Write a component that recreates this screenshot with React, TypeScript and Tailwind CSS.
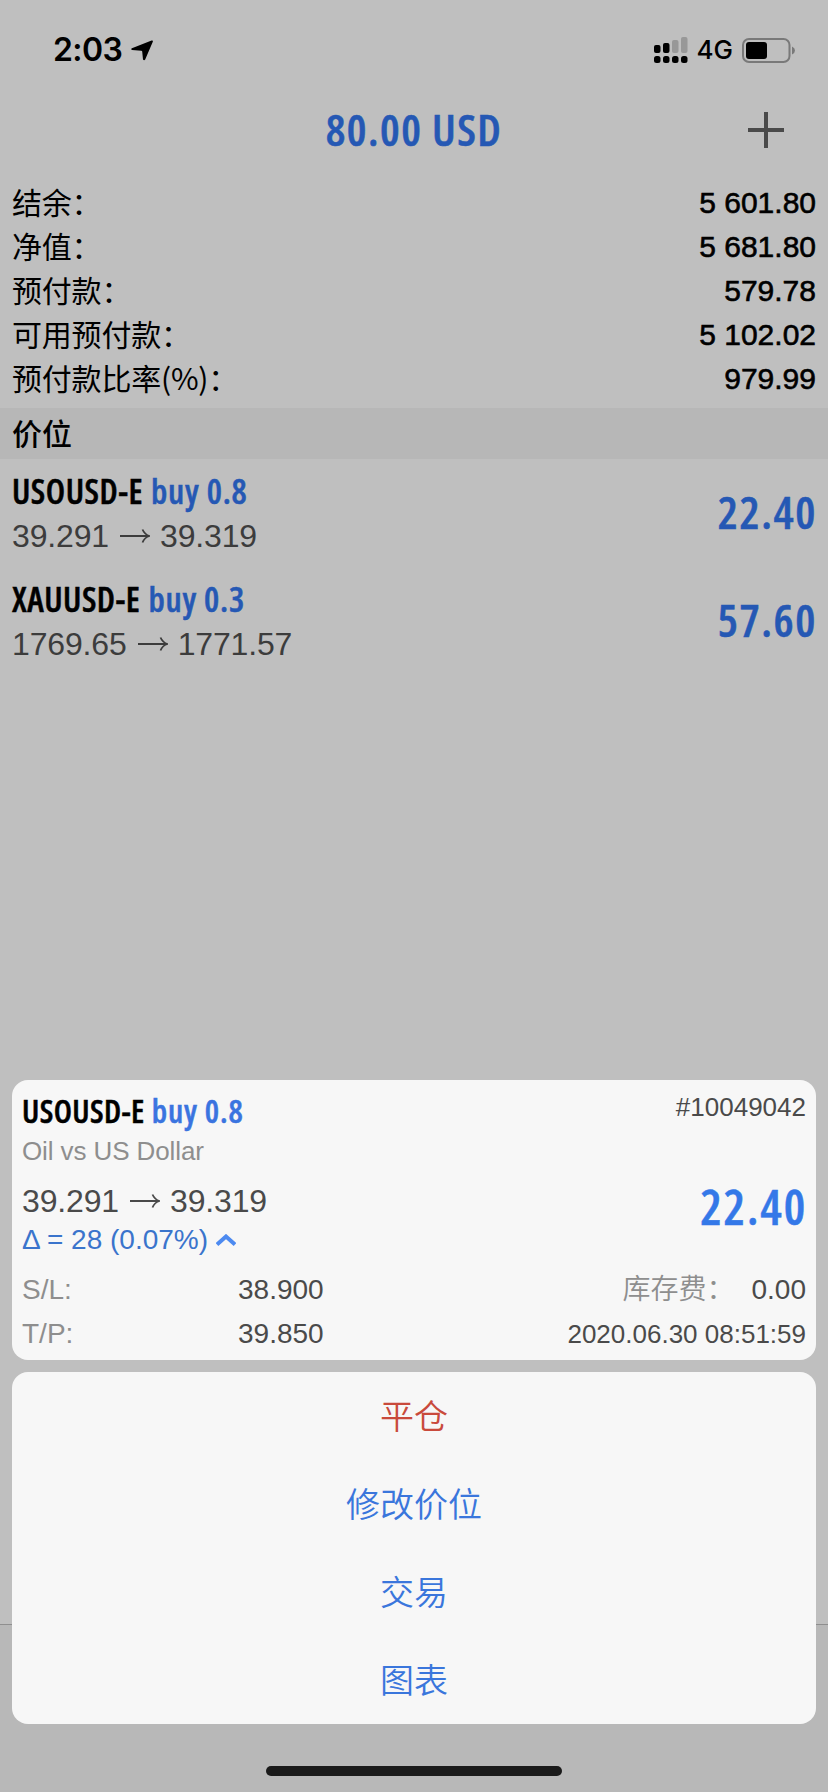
import React from 'react';

const ACCOUNT = [
  { label: '结余：', value: '5 601.80' },
  { label: '净值：', value: '5 681.80' },
  { label: '预付款：', value: '579.78' },
  { label: '可用预付款：', value: '5 102.02' },
  { label: '预付款比率(%)：', value: '979.99' },
];

const POSITIONS = [
  { symbol: 'USOUSD-E', side: 'buy 0.8', open: '39.291', current: '39.319', profit: '22.40' },
  { symbol: 'XAUUSD-E', side: 'buy 0.3', open: '1769.65', current: '1771.57', profit: '57.60' },
];

const ACTIONS = [
  { label: '平仓', danger: true },
  { label: '修改价位', danger: false },
  { label: '交易', danger: false },
  { label: '图表', danger: false },
];

const sans = "font-['Liberation_Sans','Noto_Sans_CJK_SC',sans-serif]";
const cjk = "font-['Noto_Sans_CJK_SC',sans-serif]";
const condensed = "font-['Open_Sans',sans-serif] font-semibold [font-stretch:75%] [-webkit-text-stroke:0.5px_currentColor]";

const Arrow = () => (
  <svg className="ml-[11px] mr-[10px] h-4 w-[30px] shrink-0" viewBox="0 0 30 16" fill="none" stroke="currentColor" strokeWidth="1.8" aria-hidden="true">
    <path d="M0 8H29M22.5 1.5C24 5 26 7 29.5 8C26 9 24 11 22.5 14.5" />
  </svg>
);

const StatusBar = () => (
  <header className="flex h-[88px] items-start justify-between pl-[53px] pr-8 pt-[30px] text-black">
    <div className="flex h-10 items-center">
      <span className="font-['Inter',sans-serif] text-[32px] font-semibold leading-10 tracking-[-0.6px]">2:03</span>
      <svg className="ml-[9px] h-[21px] w-[22px]" viewBox="0 0 22 21" aria-hidden="true">
        <path d="M20.6 0.5Q22.3 0 21.8 1.8L14.2 19.4Q13.2 21 12 19.5L11.2 11.6Q11.1 10.8 10.3 10.7L1 10Q-0.6 9.2 0.9 8.2Z" />
      </svg>
    </div>
    <div className="flex h-10 items-center">
      <svg className="h-[27px] w-[34px]" viewBox="0 0 34 27" aria-hidden="true">
        <rect x="0" y="8" width="6.5" height="8" rx="2" />
        <rect x="9" y="6" width="6.5" height="10" rx="2" />
        <rect x="18" y="3" width="6.5" height="13" rx="2" fill="#989898" />
        <rect x="27" y="0" width="6.5" height="16" rx="2" fill="#989898" />
        <rect x="0" y="19" width="6.5" height="7" rx="2.5" />
        <rect x="9" y="19" width="6.5" height="7" rx="2.5" />
        <rect x="18" y="19" width="6.5" height="7" rx="2.5" />
        <rect x="27" y="19" width="6.5" height="7" rx="2.5" />
      </svg>
      <span className="ml-[9px] font-['Inter',sans-serif] text-[26px] font-medium leading-10">4G</span>
      <svg className="ml-[9px] h-[25px] w-[54px]" viewBox="0 0 54 25" aria-hidden="true">
        <rect x="1" y="1" width="46.5" height="23" rx="6" fill="none" stroke="#797979" strokeWidth="2" />
        <rect x="4" y="4" width="21" height="17" rx="3" />
        <path d="M50 8.5Q53 10 53 12.5T50 16.5Z" fill="#797979" />
      </svg>
    </div>
  </header>
);

export default function App() {
  return (
    <div className={`relative h-[1792px] w-[828px] overflow-hidden bg-[#bfbfbf] ${sans}`}>
      <StatusBar />

      <div className="grid h-[92px] grid-cols-[1fr_auto_1fr] items-center px-3 pb-2">
        <h1 className={`col-start-2 pb-0.5 text-[44px] leading-none tracking-[1.5px] text-[#2558b4] ${condensed}`}>80.00 USD</h1>
        <svg className="mr-8 h-9 w-9 justify-self-end" viewBox="0 0 36 36" stroke="#4a4a4a" strokeWidth="4" aria-hidden="true">
          <path d="M0 18H36M18 0V36" />
        </svg>
      </div>

      <section className="h-[228px] px-3 text-black">
        {ACCOUNT.map((row) => (
          <div key={row.label} className="flex h-11 items-center justify-between text-[30px]">
            <span className={`pb-0.5 tracking-[-0.2px] ${cjk}`}>{row.label}</span>
            <span className="[-webkit-text-stroke:0.6px_black]">{row.value}</span>
          </div>
        ))}
      </section>

      <h2 className="flex h-[51px] items-center bg-[#b7b7b7] px-3 pt-0.5 text-[30px] font-medium text-black">价位</h2>

      <section>
        {POSITIONS.map((p) => (
          <div key={p.symbol} className="flex h-[108px] items-center justify-between px-3">
            <div>
              <div className={`flex h-11 items-center text-[34px] tracking-[0.5px] ${condensed}`}>
                <span className="text-black">{p.symbol}</span>
                <span className="ml-2 tracking-[0.8px] text-[#2558b4]">{p.side}</span>
              </div>
              <div className="flex h-11 items-center pt-0.5 text-[32px] tracking-[-0.15px] text-[#3c3c3c]">
                {p.open}
                <Arrow />
                {p.current}
              </div>
            </div>
            <div className={`-mr-px pb-0.5 text-[45px] tracking-[1.6px] text-[#2558b4] ${condensed}`}>{p.profit}</div>
          </div>
        ))}
      </section>

      {/* Dimmed tab bar behind the sheet */}
      <div className="absolute inset-x-0 bottom-0 h-[168px] border-t border-[#8f8f8f] bg-[#b8b8b8]" />

      <div className="absolute inset-x-3 top-[1080px] flex flex-col gap-3">
        <section className="h-[280px] rounded-[16px] bg-[#f7f7f7] px-[10px] pt-2 text-[#4a4a4a]">
          <div className="flex h-[46px] justify-between">
            <div className={`flex h-[46px] items-center text-[32px] tracking-[0.4px] ${condensed}`}>
              <span className="text-black">USOUSD-E</span>
              <span className="ml-[7px] tracking-[0.9px] text-[#3a74e0]">buy 0.8</span>
            </div>
            <span className="text-[26px] leading-[38px]">#10049042</span>
          </div>
          <div className="h-[46px] text-[26px] leading-[34px] tracking-[-0.1px] text-[#8e8e8e]">Oil vs US Dollar</div>
          <div className="flex h-[88px] justify-between">
            <div>
              <div className="flex h-10 items-center pt-0.5 text-[32px] tracking-[-0.15px]">
                39.291
                <Arrow />
                39.319
              </div>
              <div className="flex h-10 items-center text-[28px] text-[#3a74cc]">
                Δ = 28 (0.07%)
                <svg className="ml-2 h-3 w-5" viewBox="0 0 20 12" fill="none" stroke="#4d8af0" strokeWidth="4" aria-hidden="true">
                  <path d="M1 10.5L10 2.5L19 10.5" />
                </svg>
              </div>
            </div>
            <div className={`-mr-px text-[48px] leading-[54px] tracking-[1.9px] text-[#3478e8] ${condensed}`}>22.40</div>
          </div>
          <div className="flex h-11 items-center text-[28px]">
            <span className="w-[216px] text-[#8e8e8e]">S/L:</span>
            <span>38.900</span>
            <span className="ml-auto font-[350] text-[#8e8e8e]">库存费：</span>
            <span className="ml-[17px]">0.00</span>
          </div>
          <div className="flex h-11 items-center text-[28px]">
            <span className="w-[216px] text-[#8e8e8e]">T/P:</span>
            <span>39.850</span>
            <span className="ml-auto text-[26px]">2020.06.30 08:51:59</span>
          </div>
        </section>

        <section className="flex flex-col rounded-[16px] bg-[#f7f7f7]">
          {ACTIONS.map((a) => (
            <button key={a.label} className={`h-[88px] pt-0.5 text-[34px] font-[350] ${a.danger ? 'text-[#c94a3c]' : 'text-[#3a76dc]'}`}>
              {a.label}
            </button>
          ))}
        </section>
      </div>

      <div className="absolute bottom-4 left-[266px] h-[10px] w-[296px] rounded-full bg-[#1a1a1a]" />
    </div>
  );
}
